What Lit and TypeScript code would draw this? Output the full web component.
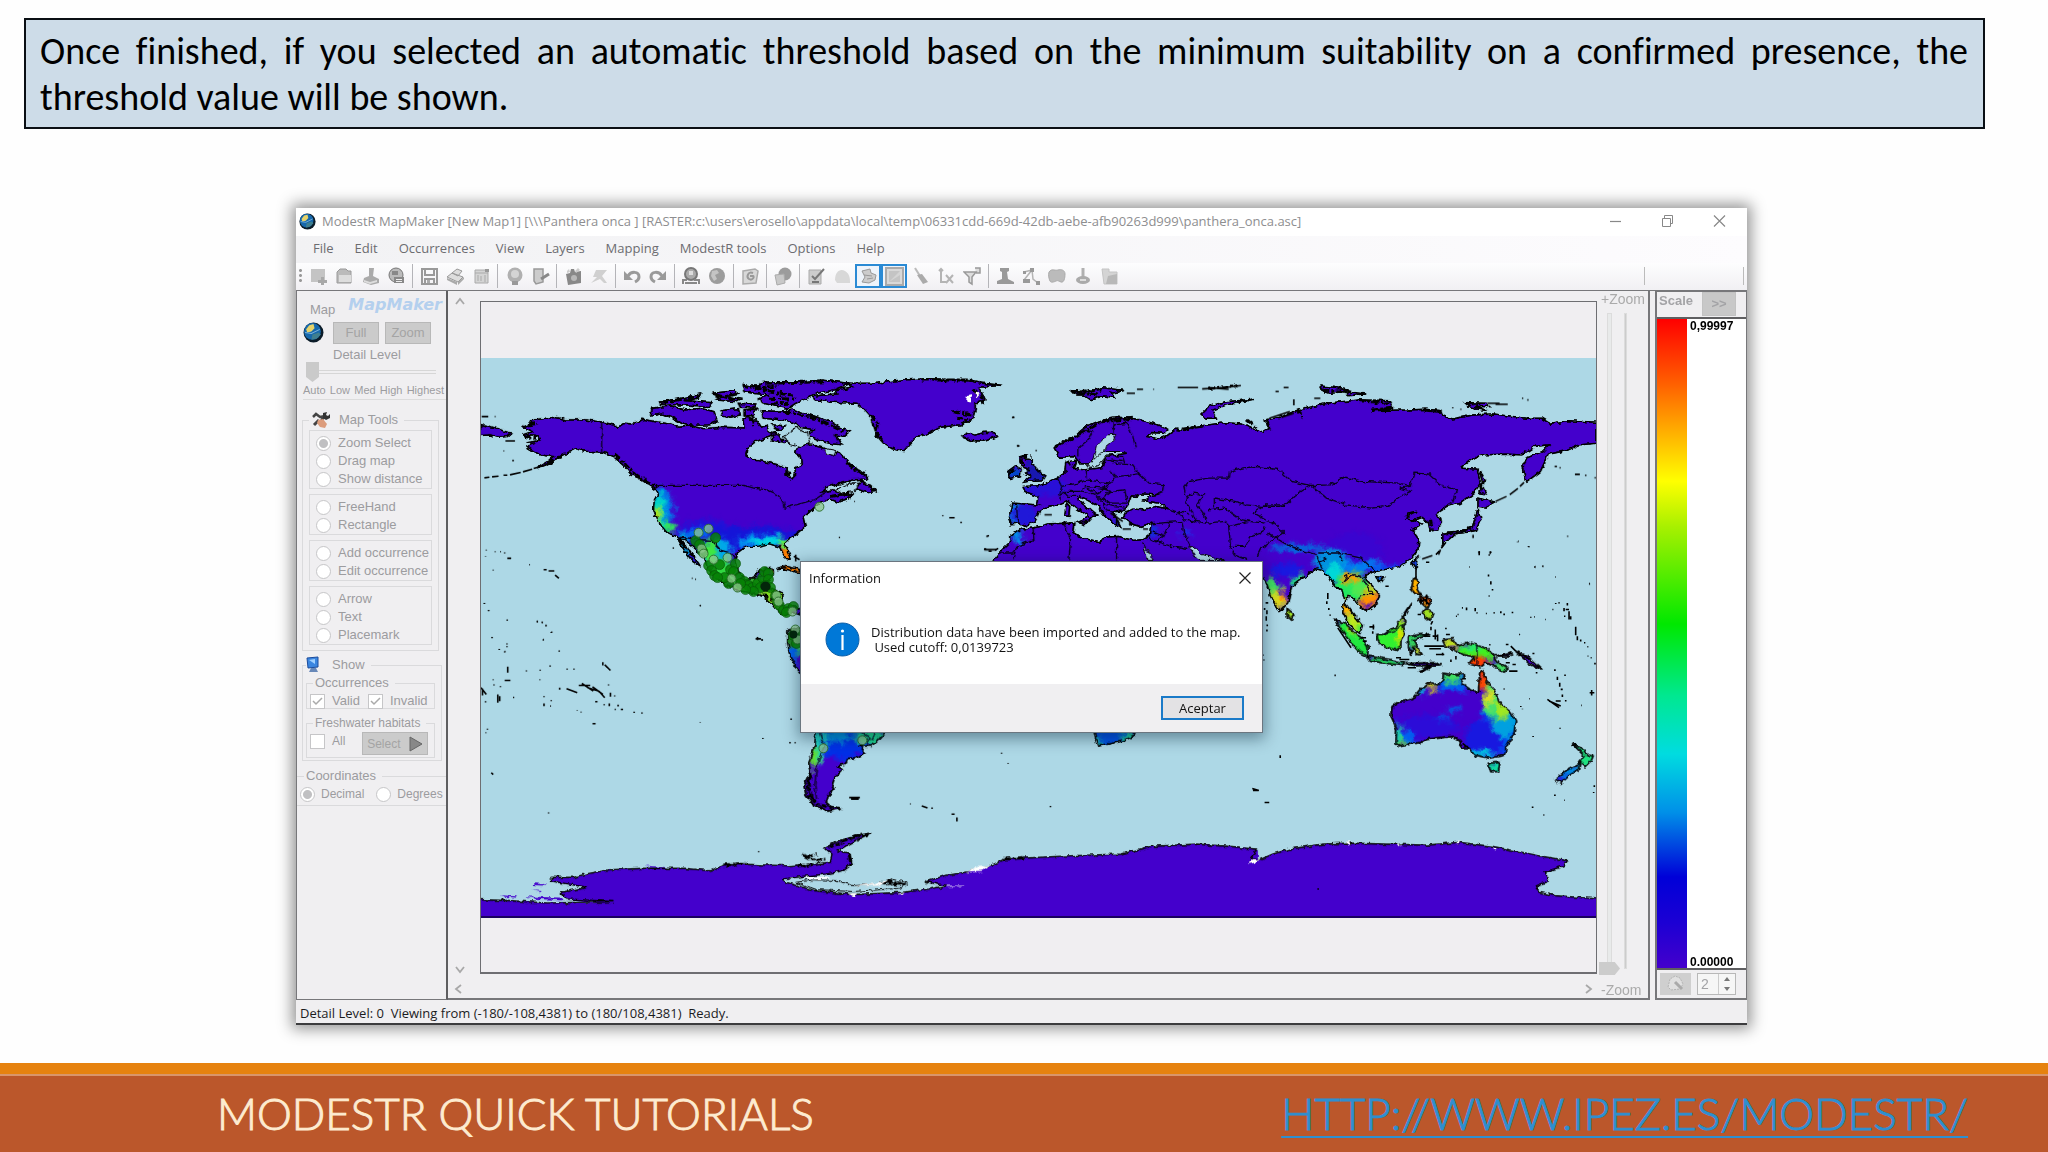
import { LitElement, html, svg, css } from "lit";
import { customElement } from "lit/decorators.js";

/* ---------- World map ---------- */

/* The outlines are digitised on four sheets, each with its own origin and scale. */
const SHEETS: Record<string, string> = {
  nw: "translate(470 340) scale(0.38265 0.33333)",
  ne: "translate(980 340) scale(0.40816 0.33333)",
  sw: "translate(470 600) scale(0.38265 0.33333)",
  se: "translate(1240 540) scale(0.33333 0.33333)",
  mid: "translate(790 550) scale(0.33333 0.33333)",
};

type Shape = [string, string];

const LAND: Shape[] = [
  // North and Central America
  ["nw", "M135 262 160 250 155 244 175 238 220 232 250 240 300 240 342 246 375 255 385 262 400 250 420 252 440 245 450 238 480 245 520 252 545 262 570 258 610 266 660 262 715 264 712 240 722 228 735 240 748 240 760 262 775 255 778 275 800 280 780 292 745 305 722 325 720 345 740 360 780 368 815 378 825 385 825 405 840 417 850 405 848 385 865 375 862 350 850 340 855 322 880 313 900 318 925 325 945 348 962 333 975 350 990 370 1005 385 1035 405 1038 418 1000 420 970 430 935 440 920 456 945 450 975 455 960 470 985 466 1002 462 985 477 960 487 940 478 915 488 890 512 870 535 875 560 855 580 835 595 820 610 830 635 838 655 825 660 815 640 808 622 780 612 750 620 725 620 710 628 697 640 694 665 700 695 712 718 740 718 755 690 790 685 792 700 780 720 775 742 800 752 815 760 812 780 820 805 845 798 862 810 862 825 840 818 822 828 800 812 785 790 765 770 740 762 700 752 670 738 640 715 620 685 610 650 585 625 560 600 545 595 560 620 575 640 595 670 600 680 580 665 560 635 545 605 535 590 510 575 490 545 478 510 480 480 490 460 485 450 465 435 440 415 420 405 400 378 375 352 345 337 300 334 275 326 250 340 230 355 200 375 175 383 200 365 215 350 180 345 145 320 165 312 150 305 180 300 175 290 135 285 160 275 Z"],
  // Greenland
  ["nw", "M895 170 920 165 960 162 955 150 1000 140 985 130 1060 130 1130 120 1200 116 1300 122 1340 130 1390 136 1330 142 1345 180 1320 190 1320 210 1312 238 1280 255 1230 262 1190 285 1165 290 1150 310 1132 335 1100 325 1080 310 1065 290 1055 260 1045 230 1030 210 1010 190 950 187 900 180 Z"],
  // Arctic archipelago
  ["nw", "M710 135 750 140 760 128 800 125 860 126 920 120 990 130 950 150 905 160 880 175 850 190 830 205 800 200 760 188 755 175 780 165 740 160 715 155 Z"],
  ["nw", "M760 212 800 214 850 210 900 230 940 245 965 262 990 275 975 290 955 285 970 315 945 312 920 305 890 290 885 275 900 270 860 262 850 250 810 240 765 235 Z"],
  ["nw", "M475 205 520 198 560 210 600 205 636 215 645 245 625 255 575 256 550 248 530 235 500 222 470 228 Z"],
  ["nw", "M492 186 540 178 600 162 595 175 560 182 630 188 625 200 560 195 500 194 Z"],
  ["nw", "M632 160 690 152 700 160 665 168 705 178 690 185 640 180 660 170 Z"],
  ["nw", "M655 212 700 206 705 225 680 232 658 226 Z"],
  ["nw", "M700 190 745 192 740 205 705 202 Z M715 210 750 208 735 228 715 225 Z"],
  ["nw", "M785 280 800 275 812 298 840 302 820 308 790 300 Z"],
  ["nw", "M790 255 822 258 812 270 795 266 Z"],
  // Iceland, Newfoundland, Great Britain, Ireland, Cuba, Chukotka
  ["nw", "M1287 292 1300 278 1318 286 1345 277 1370 278 1378 290 1345 304 1310 302 Z"],
  ["nw", "M1008 448 1022 420 1030 432 1045 436 1062 455 1040 458 Z"],
  ["nw", "M1436 350 1455 345 1452 357 1468 360 1466 372 1480 385 1488 398 1502 408 1495 420 1470 422 1448 427 1466 408 1452 400 1460 388 1440 380 Z"],
  ["nw", "M1405 395 1425 378 1440 388 1438 408 1410 416 Z"],
  ["nw", "M800 690 825 680 862 690 862 703 840 692 820 688 Z"],
  ["nw", "M25 254 60 262 75 268 105 280 95 290 70 292 50 285 25 287 Z"],
  // Eurasia and northern Africa
  ["ne", "M180 320 200 312 230 295 245 275 262 258 290 243 340 232 380 236 430 252 460 268 450 280 420 278 412 290 440 297 458 288 480 268 500 272 520 262 560 255 600 248 640 252 665 265 690 277 712 262 700 240 735 232 770 215 800 205 850 190 930 180 1005 182 1012 205 960 212 1050 210 1090 208 1130 212 1135 228 1160 237 1210 225 1260 222 1340 235 1380 235 1400 250 1440 242 1514 247 1514 310 1470 315 1440 332 1395 343 1375 395 1340 427 1330 380 1340 355 1380 335 1395 315 1360 320 1330 345 1290 343 1230 345 1205 360 1180 385 1220 388 1228 430 1212 460 1180 490 1145 500 1120 520 1132 545 1125 570 1105 574 1100 548 1085 533 1060 545 1045 530 1070 515 1050 520 1045 538 1062 540 1085 552 1060 570 1077 600 1075 630 1060 655 1030 680 990 690 955 700 945 718 960 735 980 765 975 790 948 815 925 795 915 775 903 770 895 790 920 830 938 855 932 882 905 855 890 820 895 780 888 750 872 745 860 715 840 692 825 688 800 708 765 740 755 790 735 818 715 775 700 722 680 700 600 720 20 720 35 660 50 635 75 605 75 590 100 568 130 565 170 552 230 550 228 578 250 595 295 607 305 592 340 590 375 602 400 600 415 590 420 550 395 560 370 552 350 535 358 515 375 508 400 510 430 500 462 507 440 490 400 483 418 470 440 466 395 462 385 470 372 468 362 500 350 515 325 515 345 562 325 550 305 525 290 500 245 468 240 480 270 510 290 530 275 530 262 548 240 545 268 530 240 508 215 485 195 495 165 500 145 515 135 545 110 560 95 550 76 552 72 530 78 490 138 495 142 470 110 455 106 440 145 438 190 415 208 398 210 368 235 362 228 385 255 390 300 383 308 350 360 340 300 335 285 355 270 372 245 372 232 350 195 352 Z"],
  // Sakhalin, Japan, Taiwan, Hainan
  ["ne", "M1225 390 1240 420 1230 435 1242 465 1226 462 1234 430 Z"],
  ["ne", "M1222 475 1262 487 1240 502 1222 500 Z M1222 510 1230 540 1218 572 1195 578 1165 582 1150 600 1135 612 1136 580 1180 573 1208 562 Z"],
  ["ne", "M1072 653 1070 688 1060 670 Z M973 708 990 712 980 728 Z"],
  // Arctic islands of Eurasia
  ["ne", "M540 225 560 200 600 186 670 178 605 195 572 210 580 235 555 235 Z"],
  ["ne", "M225 152 265 155 300 143 355 152 322 160 330 172 300 168 272 180 255 165 235 165 Z"],
  ["ne", "M835 138 870 142 910 152 860 160 840 153 Z M900 155 945 162 905 167 Z"],
  ["ne", "M1190 188 1240 190 1250 200 1215 200 1245 212 1205 205 Z"],
  ["ne", "M214 492 220 500 218 530 208 528 210 500 Z M240 545 262 545 255 555 Z"],
  // Indonesia, Philippines, New Guinea
  ["se", "M286 240 312 250 350 285 372 300 386 325 384 350 360 338 330 305 303 265 Z"],
  ["se", "M384 350 410 354 450 360 495 370 490 378 430 370 390 362 Z M500 372 590 370 600 376 530 379 Z M540 395 582 374 560 392 Z"],
  ["se", "M413 285 440 285 452 272 470 262 478 248 492 234 500 246 492 262 496 282 485 300 484 322 470 332 430 320 416 305 Z"],
  ["se", "M508 292 530 287 572 284 550 292 522 300 530 318 548 345 532 345 524 322 515 345 508 325 Z"],
  ["se", "M524 115 540 125 532 145 544 165 528 162 516 148 Z M560 208 580 222 572 242 560 232 550 222 Z M540 168 560 172 575 182 566 205 550 190 538 182 Z M516 190 488 232 502 222 Z"],
  ["se", "M610 302 640 298 655 320 690 310 742 328 768 352 778 372 806 388 795 398 765 380 740 370 725 382 690 372 706 352 672 345 655 335 640 328 618 318 Z M775 352 820 340 805 352 Z M830 335 870 355 910 392 870 372 Z"],
  ["se", "M143 207 163 225 155 239 143 232 Z"],
  // Australia and New Zealand
  ["se", "M458 502 475 490 520 480 545 450 570 428 600 438 612 415 612 402 640 406 675 404 665 432 700 455 718 458 722 400 730 392 745 430 765 450 780 490 815 520 829 545 825 580 800 625 796 648 750 656 705 647 692 628 670 628 662 605 640 592 620 593 560 600 545 610 520 612 480 622 470 610 472 570 462 545 455 530 Z"],
  ["se", "M748 672 782 670 777 696 755 697 Z"],
  ["se", "M1000 612 1035 632 1045 648 1062 650 1055 668 1040 682 1022 668 1036 650 Z M948 720 985 692 1022 672 1018 692 995 705 965 732 Z"],
  // South America and southern Africa
  ["sw", "M830 92 862 84 880 84 880 230 860 220 835 170 829 130 Z"],
  ["sw", "M905 385 1095 385 1060 430 1045 440 1018 440 1032 460 1010 475 985 478 980 495 960 500 972 512 950 540 945 560 950 570 935 590 930 610 942 622 970 627 935 636 895 615 878 590 872 560 888 520 884 490 900 440 Z"],
  ["mid", "M910 535 1040 535 1030 560 1000 575 960 583 925 590 918 570 Z"],
];

const ANTARCTICA_FILL: Shape[] = [
  ["sw", "M20 902 100 905 200 912 330 912 250 900 235 880 300 865 205 845 210 835 270 835 300 825 360 812 450 808 560 808 625 815 660 800 700 795 830 800 900 795 940 790 945 765 925 745 960 725 1040 702 990 735 960 755 990 762 998 795 975 815 930 825 870 832 815 840 825 850 900 875 1000 887 1130 880 1200 870 1245 860 1190 848 1240 830 1300 818 1370 795 1400 780 1568 770 1700 765 1780 742 1900 735 2013 744 2060 750 2060 970 20 970 Z"],
  ["se", "M-60 925 0 926 50 930 35 960 60 962 100 945 150 930 250 915 330 912 440 915 560 918 660 910 760 922 900 950 985 965 975 980 915 1000 930 1025 892 1040 900 1060 950 1070 1080 1080 1080 1150 -60 1150 Z"],
  ["sw", "M160 852 198 856 196 860 165 858 Z M75 888 120 892 118 896 90 894 Z M160 874 186 876 180 879 Z M140 892 235 896 240 904 170 900 Z M455 800 510 804 505 808 470 806 Z"],
];

const ANTARCTICA_COAST: Shape[] = [
  ["sw", "M20 902 100 905 200 912 373 908 250 900 235 880 305 865 205 845 210 835 270 835 300 825 360 812 450 808 560 808 625 815 660 800 700 795 830 800 900 795 940 790 945 765 925 745 960 725 1045 702 990 735 960 755 990 762 998 795 975 815 930 825 870 832 815 840 825 850 900 875 1000 887 1130 880 1200 870 1245 860 1190 848 1240 830 1300 818 1370 795 1400 780 1568 770 1700 765 1780 742 1900 735 2013 744"],
  ["se", "M0 926 50 930 35 960 60 962 100 945 150 930 250 915 330 912 440 915 560 918 660 910 760 922 900 950 985 965 975 980 915 1000 930 1025 892 1040 900 1060 950 1070 1080 1080"],
];

const BORDERS: Shape[] = [
  ["nw", "M342 246V337 M490 437H715L740 445 775 450 800 462 818 485 822 505 860 492 900 480 925 460 940 452"],
  ["nw", "M548 592 575 596 600 600 630 602 655 632 680 640 694 660 M748 718 770 700"],
  ["ne", "M330 255 360 250 375 290 382 325 M250 270 275 275 265 300 240 325 240 350 M330 240 325 285 M360 250 350 240"],
  ["ne", "M258 390 262 420 240 430 200 440 M262 420 320 430 330 412 320 390 M308 362 340 372 375 375 390 402 330 412 M390 402 415 430 450 435 448 455 430 465 M320 430 300 445 260 440 245 455 205 455 195 480 M300 445 320 455 355 450 362 490 M320 455 300 475 320 490 360 490 M250 455 280 462 300 485 310 510 M205 455 215 470 240 470 M190 415 200 440 195 470 M320 345 350 350 355 370 M320 360 350 365 M262 445 290 462 315 440 M300 490 325 500 355 505 M90 495 92 550 M140 495 150 500 M310 510 330 515"],
  ["ne", "M505 465 500 440 510 425 560 415 610 415 612 395 640 385 680 380 735 390 765 425 810 437 860 435 895 412 940 425 1030 430 1055 440 1065 400 1100 402 1130 435 1170 450 1160 485 1140 500"],
  ["ne", "M815 440 850 475 900 495 960 505 1000 500 1030 470 1057 455 1030 445 1055 440 M810 437 770 470 750 495 700 495 670 520 700 540 720 550 745 580 720 600 690 625 680 650"],
  ["ne", "M525 460 548 465 532 495 550 525 556 550 530 545 518 510 505 490 510 470 Z M575 500 575 475 625 485 655 495 690 500 750 500 M560 510 600 505 640 540 665 545 M556 550 600 545 612 560 660 545 700 550 M462 507 490 520 500 540 530 548 M480 525 500 515 515 525 M610 560 615 620 650 620 665 590 690 580 700 560"],
  ["ne", "M420 552 465 548 495 545 500 580 515 615 M465 548 450 590 430 605 470 620 510 630 M415 595 430 605 M420 575 450 590 M612 620 625 645 655 660 M705 580 760 620 825 645 840 690 M830 640 880 640 890 665 M850 655 830 665 M880 640 935 655 970 695 M905 700 890 730 915 705 935 710 950 740 965 765 935 765 925 790"],
  ["ne", "M206 552 222 600 218 662 M335 592V662 M130 565 132 600 90 620 80 660 M50 640H82 M150 565"],
  ["se", "M713 318V380 M435 285 460 278 480 262 495 255 M800 348"],
  ["sw", "M912 400 925 440 905 500 900 560 905 600 M1020 395 1045 415 1035 438 M1060 395 1050 420"],
];

const NORTH_DOTS: Shape[] = [
  ["nw", "M28 230H45 M62 230H64 M90 303H115 M85 333H87 M108 362H112 M35 414 48 412 M55 411 72 409 M85 406H95 M102 405 130 398 M136 396 160 388 M164 386 205 372 M1418 232h4 M1430 318h6 M1478 332h3 M1003 485h2 M528 625h3 M963 593h3 M40 630V632 M38 650v2 M62 636h2 M76 636h2 M88 638v3 M95 656h10 M152 675h2 M58 690v2 M190 690h8 M203 694h15 M220 706 230 716 M578 716h2 M587 719h2 M600 798h2 M35 790v2 M46 812v2 M94 842h2 M172 846h3 M185 848h2 M195 858h3 M210 878h3 M55 893v2 M189 900h2 M94 912v3 M74 928v2 M88 936h2 M231 934v2 M1235 526v3 M1252 534h14 M1283 546v4 M1352 588h4 M1343 628h6 M1355 634h8 M1372 632 1380 626 M845 650 860 660 M850 645v20"],
  ["ne", "M360 160h20 M385 148h15 M425 148h2 M485 143h50 M545 147 600 143 640 137 M560 143 610 148 M745 143h12 M725 155h8 M770 178v18 M820 175h15 M1245 190h30 M1265 193h30 M1330 175h3 M1343 180h3 M1160 202v3 M1180 207v3 M1410 380h6 M1422 384h3 M1460 404h12 M1485 407h3 M1508 414h3 M1335 428 1325 440 M1320 446 1300 465 M1292 470 1265 485 M710 235 760 215 M740 232 770 220 M300 243 350 235 M90 318h5 M485 262v10 M335 530v30 M320 520 350 545 M350 568h20 M400 568h12 M158 525h18 M15 590h5 M10 630h30 M78 233h6 M1228 440v10 M1210 585v10 M1138 610 1133 622 M1130 630 1125 645 M1110 648 1085 658 M1320 605h2 M1347 620v3 M1442 588v3 M1252 635v8 M1225 635v6 M1380 680h3 M1362 682h2 M1495 733h2"],
];

const ISLETS: Shape[] = [
  ["se", "M835 6v2 M868 20v2 M720 35v12 M753 38h4 M748 46h4 M690 82h2 M885 82h3 M910 80h2 M948 112h2 M748 105v6 M755 125v10 M760 148v5 M750 168v3 M1050 132h2 M655 225h3 M650 230h3 M668 205h3 M682 204v8 M708 205v10 M712 220h3 M740 222h3 M765 218v4 M785 215v6 M795 222v5 M820 217v4 M875 232v3 M885 232h2 M620 265v4 M918 240h2 M840 285h3 M950 190v3 M960 188v4 M940 210h3 M975 205v10 M985 190v8 M980 210h10 M990 215v25 M975 230h4 M995 230v10 M1010 262v25 M1015 290v12 M1025 300v6 M1035 310h4 M1045 322h3 M750 316h4 M768 345h5 M800 315h8 M815 320 830 335 M880 342h6 M895 380h6 M945 392h5 M978 405v5 M955 412v10 M962 430v12 M965 450h6 M970 465v8 M980 482v4 M925 480 960 505 M930 485 965 500 M950 485h15 M1052 460h14 M1058 452v16 M1068 370v5 M1055 355h3 M1046 350h2 M1026 498h2 M845 500v3 M850 508v2 M795 447v3 M870 478h2 M963 565v3 M882 590v3 M945 768h5 M975 783h2 M878 804h5 M914 826v3 M1066 738v5 M1064 758v3 M285 408h4 M122 648v8 M38 748 58 754 M40 754h15 M75 790h14 M236 1048v4"],
  ["se", "M265 160v18 M262 185v8 M268 205v6 M272 225v4 M78 190h8 M75 205v6 M82 212v12 M80 230v14 M83 255v5 M82 270v6 M70 345v4 M73 360v3 M438 140h10 M588 270v30 M595 285v20 M580 290h15 M555 290h18 M555 320h60 M570 328h35 M590 345h25 M610 340v8 M650 350v10 M635 360v8 M605 370v6 M470 355h15 M480 360h30 M620 285h12 M575 255 580 245 M575 262v10 M390 262h15 M402 255v15 M400 275v8 M295 265 335 325 M505 385h25 M540 185 560 180 M545 170v25 M550 175 570 195 M562 165v30 M670 418h10 M820 375h10 M800 370h12 M810 395h25 M850 345 870 360 M890 400h5 M530 90v25 M560 68h10 M590 45 600 34 M606 26 620 8 M548 380v3 M365 295h15 M370 305h12 M535 225h10 M670 612 690 628 M675 622h12"],
  ["sw", "M35 10v3 M46 32v3 M94 60v3 M172 66h3 M185 69h3 M195 78h2 M210 97v3 M189 120v3 M231 153v3 M55 113v3 M74 148v3 M88 156v3 M94 140v3 M96 202v18 M145 213v3 M181 211v3 M207 198v4 M250 209h3 M268 209h3 M345 188v10 M350 196 365 213 M180 240v2 M58 240v2 M88 243h15 M77 260v3 M60 255v3 M26 265 40 285 M30 268v20 M70 285v25 M75 290v15 M38 305v4 M232 265v6 M250 268 278 280 M282 258h30 M290 252 320 275 M305 265 335 275 M318 262 345 285 M335 275 350 295 M360 255v3 M365 280v12 M376 288v3 M110 294h3 M191 290v3 M210 302v3 M191 312v8 M207 320h2 M325 307h6 M347 316h3 M362 312v8 M385 316v5 M392 330h6 M376 330h3 M427 337v4 M446 341h3 M278 332v2 M288 337v2 M318 373h8 M43 388v3 M38 400h2 M600 17v3 M600 369v2 M764 416v3 M838 357v5 M833 430h4 M847 430h3 M753 756v3 M203 640v3 M53 520 58 526 M1389 460v3 M1406 491v2 M1149 614h2 M1180 620 1195 626 M1205 627h4 M1517 620v4 M1258 645h8 M1272 655v12 M990 595h28 M995 600 1015 600 M745 118h14 M750 112v10 M762 118v6"],
];

/* Heavily indented coasts, drawn with a thicker line. */
const FJORDS: Shape[] = [
  ["nw", "M375 345 405 372 425 398 450 418 490 442 M1045 225 1065 250 1060 275 1075 300 M710 135 770 150 820 165 M740 140 800 140 M775 155 840 165 M780 175 850 178 M785 192 830 190 M770 130 930 125 M1180 120H1310 M1315 150 1335 170 1340 195 M1260 215 1310 225 M1270 235 1305 240 M640 165 700 180 M500 188 600 168 M985 372 1030 405 M820 215 900 235 975 275 M735 230 740 262 M1042 440 1058 452 M940 470 990 460 M1440 352 1465 350 M1438 360 1450 378 M1408 400 1430 385 M150 255 175 250 M140 290 170 295 M200 370 245 345 M555 610 585 655 M545 595 558 625"],
  ["ne", "M185 320 240 285 300 245 375 235 M215 360 225 385 M495 268 550 258 M655 240 680 265 M705 250 710 270 M780 205 790 235 M930 182 1005 190 M230 155 300 150 M240 160 290 165 M560 145 630 137 M840 150 900 155 M960 210 1010 205 M1090 210 1130 215 M1195 190 1230 195 M1105 540 1110 570 M1145 580 1210 570"],
  ["sw", "M890 520 882 560 885 590 905 615 950 628 M884 540 890 590 900 605 M660 798 720 792 M935 745 1000 715 1040 705 M990 765 995 800 M870 768 900 785 930 780 M880 775 905 765 M855 800 895 797 M1070 850 1140 858 M1085 845 1130 855 M1395 780 1450 775"],
  ["nw", "M820 400 848 405 M770 735v40 M762 765 790 780"],
];

const ICE: Shape[] = [
  ["sw", "M870 834 935 832 940 838 890 842 Z M1000 862 1060 852 1090 842 1070 860 Z M985 884 1010 882 1005 893 Z M1115 884 1135 880 1130 886 Z M1295 820 1330 800 1358 798 1335 818 Z M1245 860 1293 860 1293 862 1245 863 Z"],
  ["se", "M25 975 40 960 62 962 40 972 Z M318 908 335 906 330 918 Z M475 912 485 918 478 922 Z M655 903 662 912 652 912 Z M760 925 775 930 765 934 Z"],
  ["nw", "M1298 168 1312 165 1308 188 1296 185 Z M1320 158 1332 160 1325 170 Z"],
];

const WATER: Shape[] = [
  ["sw", "M850 850 900 842 960 845 1000 860 1070 855 1100 840 1140 850 1120 868 1000 878 905 872 Z"],
  ["ne", "M275 368 285 320 312 285 333 283 328 300 308 320 305 335 M300 335 355 335 350 342 312 345 290 378 262 378 Z"],
  ["ne", "M512 618 522 618 545 645 575 655 600 662 535 662 Z M400 610 412 635 425 662 412 662 Z"],
  ["nw", "M925 325 955 332 950 350 930 345 Z M955 450 990 430 1015 430 1005 455 970 460 Z M820 290 850 262 880 280 890 310 860 320 830 310 Z"],
];

/* sheet, cx, cy, rx, ry, colour */
type Blob = [string, number, number, number, number, string];
const HEAT: Blob[] = [
  ["nw", 620, 600, 90, 60, "#2210d8"],
  ["nw", 740, 600, 130, 40, "#1414d8"],
  ["nw", 500, 520, 30, 75, "#0078e8"],
  ["nw", 490, 520, 16, 60, "#00d8c8"],
  ["nw", 487, 528, 10, 24, "#c8e800"],
  ["nw", 515, 565, 18, 20, "#30e060"],
  ["nw", 555, 615, 16, 40, "#00a0e0"],
  ["nw", 765, 606, 72, 22, "#0090f0"],
  ["nw", 785, 606, 55, 13, "#00d8e0"],
  ["nw", 822, 612, 18, 18, "#60f040"],
  ["nw", 828, 648, 20, 26, "#ff8000"],
  ["nw", 640, 640, 45, 45, "#00a8e8"],
  ["nw", 625, 635, 18, 40, "#40e840"],
  ["nw", 660, 700, 40, 40, "#30d840"],
  ["nw", 590, 580, 30, 15, "#0070f0"],
  ["nw", 740, 740, 60, 30, "#30b020"],
  ["nw", 800, 770, 40, 45, "#80d820"],
  ["nw", 835, 690, 45, 20, "#ff8000"],
  ["nw", 1500, 440, 60, 30, "#2810d8"],
  ["nw", 1425, 400, 20, 20, "#0048c8"],
  ["nw", 1480, 395, 26, 30, "#1818b0"],
  ["ne", 85, 520, 14, 38, "#0090e0"],
  ["ne", 110, 525, 30, 30, "#2018d8"],
  ["ne", 90, 590, 16, 18, "#0090e8"],
  ["ne", 340, 562, 20, 20, "#2020d8"],
  ["ne", 505, 580, 9, 9, "#1040f0"],
  ["ne", 425, 575, 9, 20, "#1030e0"],
  ["ne", 920, 625, 70, 45, "#3a04d0"],
  ["ne", 780, 625, 70, 10, "#0070e0"],
  ["ne", 860, 665, 42, 36, "#0090e0"],
  ["ne", 940, 680, 60, 16, "#0080f0"],
  ["ne", 1010, 690, 60, 12, "#1040f0"],
  ["ne", 870, 700, 24, 30, "#00d8d8"],
  ["ne", 915, 745, 45, 50, "#20e860"],
  ["ne", 910, 715, 26, 16, "#ffa000"],
  ["ne", 930, 745, 22, 22, "#50e850"],
  ["ne", 955, 780, 26, 24, "#ff9000"],
  ["ne", 962, 745, 12, 20, "#c0e020"],
  ["ne", 895, 800, 18, 30, "#ffb000"],
  ["ne", 918, 850, 24, 36, "#c0e820"],
  ["ne", 782, 722, 20, 14, "#20e080"],
  ["ne", 715, 745, 18, 34, "#40e060"],
  ["ne", 730, 780, 22, 30, "#d8e020"],
  ["ne", 740, 775, 9, 14, "#ff9000"],
  ["ne", 750, 690, 40, 20, "#1818e0"],
  ["ne", 1070, 670, 12, 20, "#1050e0"],
  ["ne", 980, 715, 12, 12, "#0080e0"],
  ["se", 340, 300, 70, 60, "#20e840"],
  ["se", 345, 260, 18, 30, "#c0e820"],
  ["se", 440, 364, 65, 14, "#20d850"],
  ["se", 460, 285, 55, 55, "#30f030"],
  ["se", 485, 290, 12, 28, "#e0e000"],
  ["se", 490, 245, 14, 14, "#a0e020"],
  ["se", 535, 315, 30, 32, "#30d060"],
  ["se", 540, 330, 10, 20, "#e0d020"],
  ["se", 530, 135, 26, 34, "#ffb000"],
  ["se", 560, 190, 30, 30, "#e06010"],
  ["se", 567, 225, 24, 24, "#a0e020"],
  ["se", 635, 312, 32, 18, "#c0e020"],
  ["se", 720, 335, 60, 30, "#40f020"],
  ["se", 700, 325, 30, 8, "#20e880"],
  ["se", 712, 368, 34, 18, "#ff4000"],
  ["se", 785, 385, 30, 20, "#40e060"],
  ["se", 153, 222, 20, 26, "#a0e820"],
  ["se", 790, 560, 70, 90, "#0050f0"],
  ["se", 735, 600, 60, 60, "#1818e0"],
  ["se", 795, 545, 40, 50, "#00a0e0"],
  ["se", 760, 480, 26, 60, "#40e070"],
  ["se", 790, 510, 24, 30, "#a0e820"],
  ["se", 750, 475, 14, 26, "#e0e020"],
  ["se", 732, 415, 18, 38, "#ff4800"],
  ["se", 640, 435, 60, 20, "#0060f0"],
  ["se", 640, 412, 34, 17, "#40e060"],
  ["se", 575, 440, 16, 13, "#d0d020"],
  ["se", 548, 455, 14, 10, "#00b8e0"],
  ["se", 560, 560, 100, 34, "#2c0cd8"],
  ["se", 645, 510, 18, 10, "#0060e8"],
  ["se", 610, 540, 18, 8, "#0058e8"],
  ["se", 495, 598, 36, 22, "#0060f0"],
  ["se", 480, 590, 11, 40, "#20d8a0"],
  ["se", 490, 615, 18, 8, "#60e040"],
  ["se", 730, 645, 40, 13, "#00c0e0"],
  ["se", 765, 685, 28, 24, "#10d8a0"],
  ["se", 1040, 655, 34, 40, "#20e080"],
  ["se", 985, 705, 40, 30, "#0088e0"],
  ["se", 970, 718, 20, 12, "#1040e0"],
  ["sw", 850, 120, 30, 40, "#208020"],
  ["sw", 852, 150, 20, 22, "#40d060"],
  ["sw", 840, 175, 14, 40, "#0060f0"],
  ["sw", 980, 420, 70, 60, "#0030e8"],
  ["sw", 960, 410, 40, 20, "#0090e0"],
  ["sw", 1045, 410, 40, 30, "#20d890"],
  ["sw", 912, 430, 14, 60, "#20d8c0"],
  ["sw", 896, 475, 12, 38, "#60e030"],
  ["mid", 965, 560, 60, 30, "#0050e8"],
  ["mid", 925, 582, 14, 14, "#20d8a0"],
  ["mid", 1015, 565, 26, 16, "#20d8a0"],
];

/* x, y in map pixels */
const OLD_RECORDS: [number, number][] = [
  [708, 529], [698, 533], [819, 507], [727, 558], [713, 560], [823, 749], [862, 741], [701, 549], [703, 554], [731, 579], [737, 588],
  [776, 596], [778, 602], [792, 612], [797, 640], [795, 630],
];
const RECORDS: [number, number][] = [
  [715, 538], [695, 541], [699, 545], [702, 552], [708, 566], [711, 571], [714, 576], [719, 565], [730, 570], [735, 564], [728, 584],
  [733, 572], [739, 578], [744, 582], [748, 586], [752, 588], [757, 584], [762, 578], [764, 572], [768, 574], [768, 580], [760, 588],
  [753, 592], [745, 590], [765, 586], [770, 588], [775, 596], [777, 602], [779, 606], [783, 611], [788, 609], [793, 607], [786, 613],
  [793, 636], [796, 644], [740, 584], [724, 578], [717, 578],
];

const draw = (shapes: Shape[]) =>
  shapes.map(([sheet, d]) => svg`<path transform=${SHEETS[sheet]} d=${d} vector-effect="non-scaling-stroke"></path>`);

@customElement("habitat-map")
export class HabitatMap extends LitElement {
  static styles = css`
    :host { display: block; }
    svg { display: block; width: 100%; height: auto; }
    .land { fill: #4400cc; stroke: #000; stroke-width: 1.2; }
    .coast { fill: none; stroke: #000; stroke-width: 1.4; }
    .flat { fill: #4400cc; }
    .border { fill: none; stroke: #08001c; stroke-width: 1.3; }
    .fjord { fill: none; stroke: #000; stroke-width: 3; stroke-dasharray: 7 2 3 1; }
    .dot { fill: none; stroke: #000; stroke-width: 1.6; }
    .water { fill: #add8e6; stroke: #000; stroke-width: 1; }
    .ice { fill: #fff; }
    .new { fill: #078007; fill-opacity: 0.85; stroke: #064f06; stroke-width: 0.6; }
    .old { fill: #8fc88f; fill-opacity: 0.75; stroke: #2c6e2c; stroke-width: 0.9; }
  `;

  render() {
    return html`<svg viewBox="480 358 1117 561" role="img" aria-label="World suitability map">
      <defs>
        <filter id="rough" filterUnits="userSpaceOnUse" x="470" y="350" width="1140" height="580" color-interpolation-filters="sRGB">
          <feTurbulence type="fractalNoise" baseFrequency="0.2" numOctaves="2" seed="4"></feTurbulence>
          <feDisplacementMap in="SourceGraphic" scale="5" xChannelSelector="R" yChannelSelector="G"></feDisplacementMap>
        </filter>
        <filter id="soft" filterUnits="userSpaceOnUse" x="470" y="350" width="1140" height="580" color-interpolation-filters="sRGB">
          <feGaussianBlur in="SourceGraphic" stdDeviation="2" result="b"></feGaussianBlur>
          <feTurbulence type="fractalNoise" baseFrequency="0.12" numOctaves="3" seed="9" result="n"></feTurbulence>
          <feDisplacementMap in="b" in2="n" scale="12" xChannelSelector="R" yChannelSelector="G"></feDisplacementMap>
        </filter>
        <clipPath id="ground">${draw(LAND)}</clipPath>
      </defs>
      <rect x="480" y="358" width="1117" height="561" fill="#add8e6"></rect>
      <g filter="url(#rough)">
        <g class="land">${draw(LAND)}</g>
        <g clip-path="url(#ground)"><g filter="url(#soft)">
          ${HEAT.map(([s, x, y, rx, ry, c]) => svg`<ellipse transform=${SHEETS[s]} cx=${x} cy=${y} rx=${rx} ry=${ry} fill=${c}></ellipse>`)}
        </g></g>
        <g class="coast">${draw(LAND)}</g>
        <g class="flat">${draw(ANTARCTICA_FILL)}</g>
        <g class="water">${draw(WATER)}</g>
        <g class="coast">${draw(ANTARCTICA_COAST)}</g>
        <g class="border">${draw(BORDERS)}</g>
        <g class="fjord">${draw(FJORDS)}</g>
        <g class="ice">${draw(ICE)}</g>
      </g>
      <g class="dot">${draw(NORTH_DOTS)}${draw(ISLETS)}</g>
      ${RECORDS.map(([x, y]) => svg`<circle class="new" cx=${x} cy=${y} r="5"></circle>`)}
      ${OLD_RECORDS.map(([x, y]) => svg`<circle class="old" cx=${x} cy=${y} r="4.5"></circle>`)}
      <circle cx="765" cy="587" r="5" fill="#03260a"></circle>
      <circle cx="793" cy="635" r="4" fill="#03260a"></circle>
      <path d="M480 918H1597" stroke="#1a0060" stroke-width="2"></path>
    </svg>`;
  }
}

/* ---------- Icons ---------- */

const GLYPHS: Record<string, unknown> = {
  newmap: svg`<path fill="#c4c4c4" d="M2 2h14v13H2z"/><path fill="#a8a8a8" d="M12 10h3v3h3v3h-3v2h-3v-2h-3v-3h3z"/>`,
  open: svg`<path fill="#bbb" stroke="#999" d="M2 5l3-3h6l2 2h3v12H2z"/><path fill="#ddd" d="M4 8h12v7H4z"/>`,
  stamp: svg`<path fill="#aaa" d="M8 1h5l-1 8 6 3v4l-8 2-8-3 1-4 5-2z"/><path fill="#ddd" d="M3 13l6 2 7-2v2l-7 2-6-2z"/>`,
  web: svg`<circle cx="9" cy="8" r="7" fill="#bbb" stroke="#777"/><path fill="#888" d="M5 4h6v4H5zM7 10h10v6H7z"/><path fill="#eee" d="M9 12h6v1H9zM9 14h6v1H9z"/>`,
  save: svg`<path fill="none" stroke="#999" stroke-width="2" d="M2 2h15v15H2zM5 2v6h9V2M5 17v-5h9v5"/><path fill="#aaa" d="M7 13h3v3H7z"/>`,
  print: svg`<path fill="#ddd" stroke="#999" d="M6 6l5-4 5 2-4 5zM1 10l5-4 11 4-5 5z"/><path fill="#aaa" d="M1 11l10 4v3L1 13zM12 15l6-5v2l-6 6z"/>`,
  form: svg`<path fill="#d4d4d4" stroke="#aaa" d="M3 3h13v13H3z"/><path stroke="#aaa" d="M3 6h13M6 8v6M9 9v5M13 8v7"/><path fill="#999" d="M13 2h4v3h-4z"/>`,
  bulb: svg`<circle cx="10" cy="8" r="7.500" fill="#b0b0b0"/><circle cx="10" cy="7" r="4" fill="#d4d4d4"/><path fill="#999" d="M7 14h6v4H7z"/>`,
  edit: svg`<path fill="#ccc" stroke="#999" stroke-width="1.500" d="M3 2h9v13l-7 2-2-3z"/><path fill="none" stroke="#888" stroke-width="3" d="M10 12l8-5"/>`,
  camera: svg`<path fill="#888" d="M2 7l4-1 1-4h3l1 3 6-1v12l-13 2z"/><path fill="#ccc" d="M3 4l2-2 1 3-3 1zM11 4l3-3 2 2-4 3z"/><circle cx="10" cy="11" r="3" fill="#b8b8b8"/>`,
  cut: svg`<path fill="#d0d0d0" d="M6 3h11l-5 6 5 7h-3l-4-4-9 4 6-6H3z"/>`,
  undo: svg`<path fill="none" stroke="#9a9a9a" stroke-width="3" d="M5 9c3-5 11-5 11 1 0 3-2 4-4 5"/><path fill="#9a9a9a" d="M1 4v9h9z"/>`,
  redo: svg`<path fill="none" stroke="#9a9a9a" stroke-width="3" d="M13 9C10 4 2 4 2 10c0 3 2 4 4 5"/><path fill="#9a9a9a" d="M17 4v9H8z"/>`,
  search: svg`<circle cx="9" cy="7" r="6" fill="#aaa" stroke="#777" stroke-width="2"/><path fill="#ddd" d="M7 4h4v4H7z"/><path fill="none" stroke="#888" stroke-width="2" d="M1 17V13h4M12 13h5v4M3 16h12"/>`,
  globe: svg`<circle cx="9" cy="9" r="8" fill="#9c9c9c"/><path fill="#c4c4c4" d="M4 4l5-1 2 3-4 2 2 4-3 2-3-5z"/>`,
  refresh: svg`<path fill="#d8d8d8" stroke="#aaa" stroke-width="1.500" d="M2 4l12-2 3 2-2 12-13 1z"/><path fill="none" stroke="#999" stroke-width="2" d="M12 6c-5-2-7 4-4 6s6-2 4-3H9"/>`,
  layers: svg`<circle cx="11" cy="7" r="6.500" fill="#9c9c9c"/><path fill="#c8c8c8" stroke="#aaa" d="M1 8l9-1 1 9-8 2z"/>`,
  check: svg`<path fill="#ccc" stroke="#aaa" d="M2 3h12v14H2z"/><path fill="none" stroke="#777" stroke-width="2" d="M5 9l3 3 9-10M5 15h7"/>`,
  blob: svg`<path fill="#d8d8d8" d="M2 13c0-8 5-12 10-9s5 8 5 12H4z"/>`,
  puzzle: svg`<path fill="#ccc" stroke="#999" d="M3 4l8-2 1 4 5 2-1 5-6 3-7-1 3-5z"/><path fill="none" stroke="#999" d="M5 8l8 1M8 12l6-1"/>`,
  raster: svg`<path fill="#d8d8d8" stroke="#aaa" stroke-width="2" d="M1 1h17v17H1z"/><path fill="#c4c4c4" d="M4 4h11v11H4z"/><path fill="#d4d4d4" d="M4 15L15 4v4z"/>`,
  brush: svg`<path fill="none" stroke="#bbb" stroke-width="2" d="M4 1l5 8"/><path fill="#aaa" d="M6 8l5-1 6 8-5 2z"/>`,
  lx: svg`<path fill="none" stroke="#b4b4b4" stroke-width="2" d="M4 2v13h5M2 4l2-2 2 2M9 8l7 8M16 8l-7 8"/>`,
  filter: svg`<path fill="#ddd" stroke="#999" stroke-width="1.500" d="M1 5h12l-4 5v7l-3-2v-5zM12 1h5v5h-4"/>`,
  tower: svg`<path fill="#999" d="M4 1h9v3l-2 1 1 7 6 3v2H1v-3l5-2V5L4 4z"/>`,
  nodes: svg`<path fill="none" stroke="#b4b4b4" stroke-width="1.500" d="M2 13L10 3l1 9 5 4M2 5l8-2"/><path fill="#999" d="M8 1h4v4H8zM1 12h7v4H1zM14 14h4v4h-4zM1 4h3v3H1z"/>`,
  region: svg`<path fill="#bbb" stroke="#aaa" d="M1 5c3-4 6-1 9-2s7 0 7 4-1 9-4 8-3-2-5-1-5 2-6 0-2-6-1-9z"/>`,
  pin: svg`<path stroke="#b0b0b0" stroke-width="3" d="M9 1v11"/><ellipse cx="9" cy="13" rx="7" ry="4" fill="#aaa"/><path fill="#ddd" d="M6 12h6v2H6z"/>`,
  folder: svg`<path fill="#d4d4d4" stroke="#c4c4c4" d="M2 2h7v3h8v12H4z"/><path fill="#b8b8b8" d="M8 9l9-2v10H6z"/>`,
};

const GROUPS: string[][] = [
  ["newmap", "open", "stamp", "web"],
  ["save", "print", "form"],
  ["bulb", "edit"],
  ["camera", "cut"],
  ["undo", "redo"],
  ["search", "globe"],
  ["refresh"],
  ["layers"],
  ["check", "blob", "puzzle", "raster", "brush", "lx", "filter"],
  ["tower", "nodes", "region", "pin", "folder"],
];

const globe = (size: number) => html`<svg width=${size} height=${size} viewBox="0 0 20 20" aria-hidden="true">
  <circle cx="10" cy="10" r="9.500" fill="#0c1c28"></circle>
  <circle cx="9" cy="9" r="8" fill="#1668ac"></circle>
  <path d="M3 7l3-4 4-1 1 4-3 3-4 1z" fill="#e6d36a"></path>
  <path d="M9 12l6-2 2 2-4 4-5 1z" fill="#3f7f8f"></path>
  <path d="M2 10l6 1 8-4" stroke="#7cb4dc" fill="none"></path>
</svg>`;

const MENU = ["File", "Edit", "Occurrences", "View", "Layers", "Mapping", "ModestR tools", "Options", "Help"];
const TOOLS = [
  ["Zoom Select", "Drag map", "Show distance"],
  ["FreeHand", "Rectangle"],
  ["Add occurrence", "Edit occurrence"],
  ["Arrow", "Text", "Placemark"],
];

@customElement("app-root")
export class AppRoot extends LitElement {
  static styles = css`
    :host { display: block; font-family: "Open Sans", "Noto Sans", sans-serif; color: #000; }
    * { box-sizing: border-box; }
    button, input, output { font: inherit; color: inherit; margin: 0; }
    .slide { min-height: 100vh; display: flex; flex-direction: column; background: #fefefe; }
    .note {
      margin: 18px 63px 0 24px; padding: 8px 15px 7px 14px; border: 2px solid #0a0f14; background: #cddce8;
      font-family: Carlito, Lato, sans-serif; font-size: 38px; line-height: 46px; text-align: justify; font-variant-ligatures: none;
    }
    .window {
      position: relative; flex: 1; margin: 79px 301px 38px 296px; display: flex; flex-direction: column;
      background: #f0eff1; border-bottom: 2px solid #3c3c3e; box-shadow: 0 0 14px 4px rgba(0, 0, 0, 0.42); font-size: 13px;
    }
    .titlebar { display: flex; align-items: center; height: 28px; padding: 0 20px 2px 3px; gap: 6px; background: #fff; color: #8e8e90; }
    .titlebar .name { flex: 1; font-weight: 400; font-size: 13px; margin: 0; white-space: nowrap; }
    .winbtns { display: flex; gap: 37px; }
    .plain { border: 0; background: none; padding: 0; display: grid; place-items: center; }
    .menu { display: flex; align-items: center; height: 27px; padding: 0 0 3px 17px; gap: 21px; background: linear-gradient(90deg, #f2f2f4, #fdfcfe); color: #6c6c70; }
    .menu a { color: inherit; text-decoration: none; }
    .toolbar { display: flex; align-items: center; height: 28px; padding: 0 0 1px 3px; background: linear-gradient(#fdfdfe, #f1f0f3); border-bottom: 1px solid #77777a; }
    .grip { width: 6px; height: 16px; background: radial-gradient(circle, #999 1px, transparent 2px) 0 0 / 3px 5px repeat-y; }
    .group { display: flex; }
    .group + .group { border-left: 1px solid #b4b4b8; padding-left: 3px; margin-left: 3px; }
    .tool { width: 26px; height: 24px; border: 0; padding: 0; background: none; display: grid; place-items: center; }
    .tool.on { border: 2px solid #2a8ad4; background: #eef4fb; }
    .rest { flex: 1; align-self: stretch; margin: 4px 3px; display: flex; justify-content: flex-end; }
    .rest i { width: 100px; border-left: 1px solid #bbb; border-right: 1px solid #bbb; }
    .body { flex: 1; display: flex; min-height: 0; }

    .side { width: 152px; border-right: 2px solid #5e5e60; border-bottom: 1px solid #77777a; border-left: 1px solid #77777a; font-family: "Liberation Sans", Arial, sans-serif; font-size: 13px; line-height: 18px; color: #9c9c9f; }
    .view { display: grid; grid-template-columns: 30px 1fr; padding: 4px 0 0 6px; }
    .brand { display: flex; align-items: end; justify-content: space-between; grid-column: 1 / 3; height: 24px; padding: 0 4px 0 7px; }
    .brand b { font: italic bold 16px/20px "DejaVu Sans", sans-serif; color: #b4d0ee; align-self: start; }
    .pair { display: flex; gap: 6px; align-items: center; height: 27px; }
    .gray { border: 1px solid #b8b8b8; background: #cbcbcb; color: #a4a4a4; width: 46px; height: 22px; padding: 0; }
    .view svg { align-self: center; }
    .level { grid-column: 1 / 3; padding-left: 30px; }
    .slider { grid-column: 1 / 3; width: 130px; height: 20px; margin: -2px 0 0 3px; appearance: none; background: linear-gradient(#d6d6d6, #d6d6d6) 0 8px / 100% 1px no-repeat, linear-gradient(#d6d6d6, #d6d6d6) 0 11px / 100% 1px no-repeat; }
    .slider::-webkit-slider-thumb { appearance: none; width: 13px; height: 20px; background: #cacaca; clip-path: polygon(0 0, 100% 0, 100% 75%, 50% 100%, 0 75%); }
    .marks { grid-column: 1 / 3; display: flex; justify-content: space-between; font-size: 11px; line-height: 17px; padding-right: 2px; border-bottom: 1px solid #dcdcdc; }
    fieldset { margin: 0; border: 1px solid #dadadc; min-width: 0; padding: 0; }
    legend { padding: 0 6px 0 2px; line-height: 18px; }
    .tools { margin: 11px 7px 0 5px; padding: 1px 6px 0 6px; }
    .tools > legend { display: flex; gap: 8px; margin-left: 0; align-items: center; }
    .box { border: 1px solid #dadadc; padding: 3px 0 0 6px; margin-bottom: 5px; }
    label { display: flex; align-items: center; gap: 7px; height: 18px; white-space: nowrap; }
    input[type="radio"], input[type="checkbox"] { appearance: none; width: 15px; height: 15px; border: 1px solid #c6c6c8; background: #fff; flex: none; }
    input[type="radio"] { border-radius: 50%; }
    input[type="radio"]:checked { background: radial-gradient(circle, #c0c0c2 0 4px, #fff 5px); }
    .tick { position: relative; display: grid; }
    .tick svg { position: absolute; left: 2px; top: 3px; pointer-events: none; }
    .show { margin: 5px 4px 0 5px; padding: 0 6px 2px 3px; }
    .show > legend { display: flex; gap: 12px; align-items: center; padding-left: 0; }
    .show fieldset { display: flex; padding: 0 0 3px 3px; }
    .show fieldset legend { margin-left: 3px; }
    .occ { gap: 8px; height: 35px; }
    .fresh { justify-content: space-between; margin-top: 5px; height: 44px; font-size: 12px; }
    .fresh .gray { width: 66px; height: 23px; display: flex; align-items: center; justify-content: space-around; margin-right: 6px; }
    .coords { border-width: 1px 0; margin-top: 6px; padding: 0 0 2px 3px; display: flex; gap: 12px; font-size: 12px; }
    .coords legend { margin-left: 4px; font-size: 13px; }
    .coords label { gap: 6px; }

    .center { flex: 1; display: grid; grid-template-columns: 32px 1fr 51px; grid-template-rows: 1fr 24px; border-bottom: 2px solid #77777a; border-right: 2px solid #77777a; min-width: 0; padding-top: 10px; }
    .bar { display: flex; justify-content: space-between; align-items: center; color: #aaa; }
    .bar.v { flex-direction: column; padding-right: 8px; margin-top: -4px; }
    .bar.h { grid-column: 1 / 3; padding: 6px 4px 0 6px; }
    .port { border: 1px solid #6e6e72; border-bottom-width: 2px; padding-top: 56px; background: #f0eef1; }
    .zoom { grid-row: 1 / 3; grid-column: 3; display: flex; flex-direction: column; font: 14px/16px "Liberation Sans", Arial, sans-serif; color: #aaa; padding: 0 0 0 4px; margin-top: -10px; }
    .rail { flex: 1; margin: 6px 0 13px; display: flex; position: relative; padding-left: 6px; gap: 12px; }
    .rail i { width: 5px; border: 1px solid #dcdcdc; background: #e8eaea; }
    .rail i + i { width: 3px; background: #ccc; }
    .knob { position: absolute; left: -2px; bottom: -6px; width: 21px; height: 13px; background: #ccc; clip-path: polygon(0 0, 75% 0, 100% 50%, 75% 100%, 0 100%); }

    .scale { width: 92px; margin-left: 5px; border: 1px solid #77777a; border-left-width: 2px; border-bottom-width: 2px; display: flex; flex-direction: column; font-family: "Liberation Sans", Arial, sans-serif; color: #a3a3a6; }
    .scale header { display: flex; height: 27px; justify-content: space-between; padding: 0 10px 0 2px; font: bold 13px/18px "Liberation Sans", Arial, sans-serif; border-bottom: 2px solid #5e5e60; }
    .scale header button { width: 34px; height: 24px; border: 1px solid #c2c2c2; background: #c8c8c8; padding: 0; }
    .ramp { flex: 1; display: flex; background: #fff; border-bottom: 2px solid #5e5e60; color: #000; font: bold 12px/15px "Liberation Sans", Arial, sans-serif; }
    .ramp i { width: 30px; background: linear-gradient(#f00 0%, #ff6000 10%, #ffa000 16%, #ffff00 25%, #a8f000 32%, #00e800 47%, #00e890 58%, #00dce0 67%, #0090e8 76%, #0000d8 86%, #1c00d4 93%, #4400cc 100%); }
    .ramp div { display: flex; flex-direction: column; justify-content: space-between; padding-left: 3px; }
    .ramp span:last-child { line-height: 11px; }
    .foot { display: flex; height: 28px; padding: 3px 10px 2px 3px; justify-content: space-between; }
    .foot button { width: 31px; height: 22px; border: 0; background: #cfcfcf; padding: 0; }
    .spin { display: flex; width: 39px; height: 22px; border: 1px solid #b8b8b8; background: #f6f6f6; align-items: center; }
    .spin input { width: 20px; border: 0; background: none; padding: 0 3px; font-size: 14px; outline: 0; }
    .spin span { flex: 1; border-left: 1px solid #ccc; height: 100%; display: grid; place-items: center; }
    .status { height: 23px; padding-left: 4px; line-height: 26px; color: #1c1c1e; white-space: pre; }

    .dialog { position: absolute; left: 504px; top: 353px; width: 463px; margin: 0; padding: 0; border: 1px solid #6b7680; background: #fff; color: #111; box-shadow: 0 4px 14px 2px rgba(0, 30, 50, 0.42); display: block; }
    .dialog header { display: flex; justify-content: space-between; padding: 7px 10px 1px 8px; line-height: 18px; }
    .dialog h2 { font-size: 13px; font-weight: 400; margin: 0; }
    .msg { display: flex; gap: 11px; padding: 34px 20px 27px 24px; align-items: start; }
    .msg p { margin: 3px 0 0; line-height: 15px; white-space: pre; }
    .actions { background: #f0eff1; padding: 12px 18px; display: flex; justify-content: flex-end; }
    .ok { width: 83px; height: 24px; border: 2px solid #1a7ac8; background: #e3e2e4; padding: 0; line-height: 18px; }

    .footer { display: flex; justify-content: space-between; align-items: center; height: 89px; border-top: 11px solid #e6820f; padding: 0 80px 0 217px; background: #bb572b; box-shadow: inset 0 2px 0 #d9956a; color: #fdebd0; font: 300 44px/60px Lato, Carlito, sans-serif; -webkit-text-stroke: 1px currentColor; }
    .footer a { color: #2e8fd0; text-decoration-thickness: 2px; text-underline-offset: 6px; }
  `;

  private tick = html`<svg width="11" height="9" viewBox="0 0 11 9" aria-hidden="true"><path d="M1 4l3 3 6-6" fill="none" stroke="#aaa" stroke-width="1.500"></path></svg>`;

  private chevron(d: string) {
    return html`<svg width="10" height="10" viewBox="0 0 10 10" aria-hidden="true"><path d=${d} fill="none" stroke="#a8a8a8" stroke-width="1.800"></path></svg>`;
  }

  render() {
    return html`<div class="slide">
      <div class="note">Once finished, if you selected an automatic threshold based on the minimum suitability on a confirmed presence, the threshold value will be shown.</div>
      <main class="window">
        <div class="titlebar">
          ${globe(17)}
          <h1 class="name">ModestR MapMaker [New Map1] [\\\\\\Panthera onca ] [RASTER:c:\\users\\erosello\\appdata\\local\\temp\\06331cdd-669d-42db-aebe-afb90263d999\\panthera_onca.asc]</h1>
          <div class="winbtns">
            <button class="plain" aria-label="Minimize"><svg width="15" height="15"><path d="M2 7.500h11" stroke="#888" stroke-width="1.200"></path></svg></button>
            <button class="plain" aria-label="Restore"><svg width="15" height="15"><path d="M2.500 4.500h8v8h-8zM4.500 4V1.500h8v8H11" fill="none" stroke="#888"></path></svg></button>
            <button class="plain" aria-label="Close"><svg width="15" height="15"><path d="M2 1.500l11 11M13 1.500l-11 11" stroke="#888" stroke-width="1.200"></path></svg></button>
          </div>
        </div>
        <nav class="menu">${MENU.map((m) => html`<a href="#">${m}</a>`)}</nav>
        <div class="toolbar">
          <span class="grip"></span>
          ${GROUPS.map((g) => html`<div class="group">${g.map((name) => html`<button class="tool ${name === "puzzle" || name === "raster" ? "on" : ""}" aria-label=${name}><svg width="19" height="19" viewBox="0 0 19 19" fill="none">${GLYPHS[name]}</svg></button>`)}</div>`)}
          <div class="rest"><i></i></div>
        </div>
        <div class="body">
          ${this.side()}
          <section class="center">
            <div class="bar v">${this.chevron("M1 7l4-5 4 5")}${this.chevron("M1 3l4 5 4-5")}</div>
            <div class="port"><habitat-map></habitat-map></div>
            <div class="zoom"><span>+Zoom</span><div class="rail"><i></i><i></i><span class="knob"></span></div><span>-Zoom</span></div>
            <div class="bar h">${this.chevron("M7 1L2 5l5 4")}${this.chevron("M3 1l5 4-5 4")}</div>
          </section>
          <aside class="scale">
            <header><span>Scale</span><button>&gt;&gt;</button></header>
            <div class="ramp"><i></i><div><span>0,99997</span><span>0.00000</span></div></div>
            <div class="foot">
              <button aria-label="Scale settings"><svg width="22" height="18" viewBox="0 0 22 18"><path d="M3 13l2-8 5-3 5 2 3 6-3 5-9 1z" fill="#e0e0e0" stroke="#b4b4b4" stroke-dasharray="2 1"></path><path d="M10 8l7 7" stroke="#aaa" stroke-width="3"></path></svg></button>
              <div class="spin"><input type="text" value="2" aria-label="Decimals" /><span><svg width="8" height="16" viewBox="0 0 8 16"><path d="M4 1l3 4H1zM4 15l3-4H1z" fill="#777"></path></svg></span></div>
            </div>
          </aside>
        </div>
        <div class="status">Detail Level: 0  Viewing from (-180/-108,4381) to (180/108,4381)  Ready.</div>
        <section class="dialog" role="dialog" aria-label="Information">
          <header><h2>Information</h2><button class="plain" aria-label="Close dialog"><svg width="14" height="14"><path d="M1.500 1.500l11 11M12.500 1.500l-11 11" stroke="#222" stroke-width="1.200"></path></svg></button></header>
          <div class="msg">
            <svg width="35" height="35" viewBox="0 0 35 35" aria-hidden="true"><circle cx="17.500" cy="17.500" r="16.500" fill="#0078d7" stroke="#0d5ea6"></circle><circle cx="17.500" cy="9" r="1.600" fill="#fff"></circle><path d="M17.500 13v15" stroke="#fff" stroke-width="2.200"></path></svg>
            <p>Distribution data have been imported and added to the map.
 Used cutoff: 0,0139723</p>
          </div>
          <div class="actions"><button class="ok">Aceptar</button></div>
        </section>
      </main>
      <footer class="footer"><span>MODESTR QUICK TUTORIALS</span><a href="#">HTTP://WWW.IPEZ.ES/MODESTR/</a></footer>
    </div>`;
  }

  private side() {
    return html`<aside class="side">
      <div class="view">
        <div class="brand"><span>Map</span><b>MapMaker</b></div>
        ${globe(21)}
        <div class="pair"><button class="gray">Full</button><button class="gray">Zoom</button></div>
        <label class="level" for="detail">Detail Level</label>
        <input class="slider" id="detail" type="range" min="0" max="4" value="0" />
        <div class="marks"><span>Auto</span><span>Low</span><span>Med</span><span>High</span><span>Highest</span></div>
      </div>
      <fieldset class="tools">
        <legend><svg width="20" height="18" viewBox="0 0 20 18" aria-hidden="true"><path d="M2 6l3-3 4 3 5-1M10 9L15 5" fill="none" stroke="#444" stroke-width="2.500"></path><path d="M12 2l4-1-1 3 2 1 2-2v4l-4 2-3-2z" fill="#333"></path><path d="M3 14l5-5" stroke="#444" stroke-width="3"></path><path d="M7 9l5-1 4 5-2 4-5-1-3-4z" fill="#dc9c7c"></path></svg>Map Tools</legend>
        ${TOOLS.map((box) => html`<div class="box">${box.map((t) => html`<label><input type="radio" name="tool" ?checked=${t === "Zoom Select"} />${t}</label>`)}</div>`)}
      </fieldset>
      <fieldset class="show">
        <legend><svg width="14" height="18" viewBox="0 0 14 18" aria-hidden="true"><path d="M1 2l11-1v10l-10 1z" fill="#3b86e0" stroke="#1c4c9c"></path><path d="M3 4l6-1v5z" fill="#9fd0ff"></path><path d="M5 12h5l2 4H3z" fill="#6888b8"></path></svg>Show</legend>
        <fieldset class="occ"><legend>Occurrences</legend>
          <label><span class="tick"><input type="checkbox" checked aria-label="Valid" />${this.tick}</span>Valid</label>
          <label><span class="tick"><input type="checkbox" checked aria-label="Invalid" />${this.tick}</span>Invalid</label>
        </fieldset>
        <fieldset class="fresh"><legend>Freshwater habitats</legend>
          <label><input type="checkbox" />All</label>
          <button class="gray">Select<svg width="14" height="16" viewBox="0 0 14 16"><path d="M1 1l12 7-12 7z" fill="#888" stroke="#666"></path></svg></button>
        </fieldset>
      </fieldset>
      <fieldset class="coords"><legend>Coordinates</legend>
        <label><input type="radio" name="coord" checked />Decimal</label>
        <label><input type="radio" name="coord" />Degrees</label>
      </fieldset>
    </aside>`;
  }
}
